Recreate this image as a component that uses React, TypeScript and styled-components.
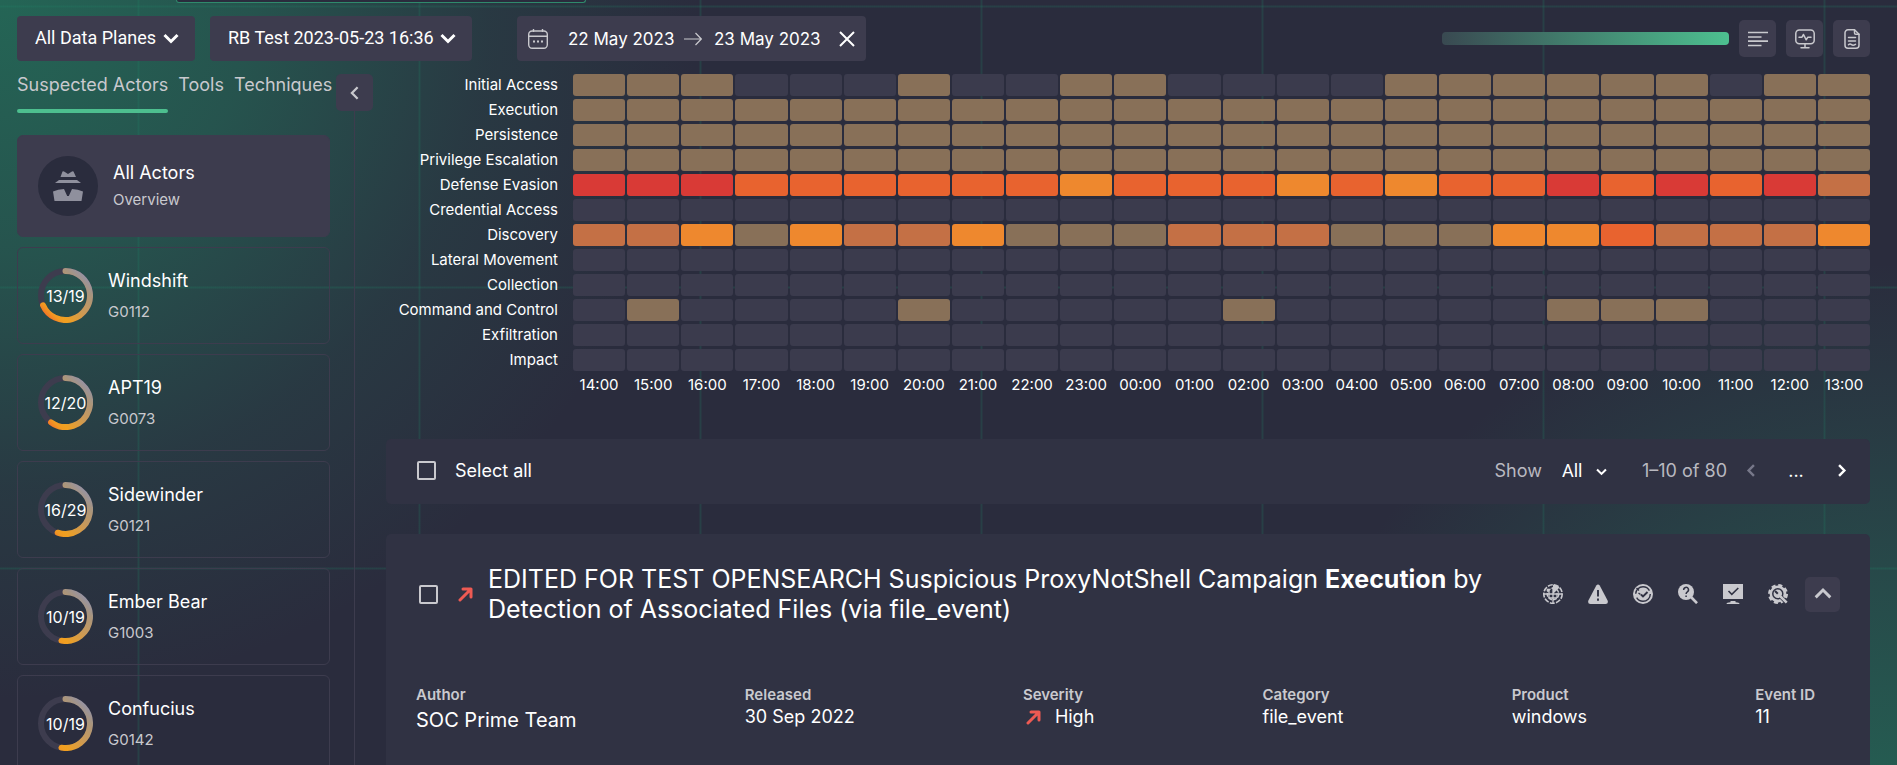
import React from "react";
import styled, { createGlobalStyle } from "styled-components";

const color = {
  base: "#2a2c3d",
  raised: "#3d3c4e",
  panel: "#303243",
  text: "#ffffff",
  soft: "#c9c9ce",
  muted: "#b9b9c0",
  green: "#4dbf8f",
  red: "#ee5a53",
};

const GlobalStyle = createGlobalStyle`
  *, *::before, *::after { box-sizing: border-box; }
  body {
    margin: 0;
    background: ${color.base};
    color: ${color.text};
    font-family: Inter, "Noto Sans", sans-serif;
    font-size: 18px;
  }
  button, input, select { font: inherit; color: inherit; margin: 0; }
  button { cursor: pointer; }
  svg { display: block; flex: none; }
`;

const Page = styled.div`
  display: flex;
  flex-direction: column;
  height: 100vh;
  overflow: hidden;
  background:
    linear-gradient(90deg, rgba(30, 130, 100, 0.1) 0 3px, transparent 3px) 137px 0 / 281px 281px,
    linear-gradient(90deg, rgba(30, 140, 108, 0.12) 0 1px, transparent 1px) 138px 0 / 281px 281px,
    linear-gradient(180deg, rgba(30, 130, 100, 0.1) 0 3px, transparent 3px) 0 5px / 281px 281px,
    linear-gradient(180deg, rgba(30, 140, 108, 0.12) 0 1px, transparent 1px) 0 6px / 281px 281px,
    radial-gradient(circle 700px at 0 0, rgba(35, 112, 90, 0.84), rgba(35, 112, 90, 0.58) 36%, rgba(35, 112, 90, 0.19) 70%, rgba(35, 112, 90, 0) 100%),
    radial-gradient(circle 640px at 100% 118%, rgba(35, 112, 90, 0.84), rgba(35, 112, 90, 0.7) 21%, rgba(35, 112, 90, 0.46) 48%, rgba(35, 112, 90, 0.2) 76%, rgba(35, 112, 90, 0) 100%),
    ${color.base};
`;

const SearchEdge = styled.div`
  flex: none;
  height: 3px;
  width: 410px;
  margin-left: 176px;
  border: 1px solid #2f8a6c;
  border-top: 0;
  border-radius: 0 0 3px 3px;
  background: ${color.base};
`;

const Toolbar = styled.header`
  display: flex;
  align-items: center;
  gap: 15px;
  padding: 13px 27px 0 17px;
`;

const PickerBox = styled.label`
  position: relative;
  display: block;
  font-family: Roboto, sans-serif;
  svg {
    position: absolute;
    right: 16px;
    top: 14px;
    pointer-events: none;
  }
`;

const Picker = styled.select`
  appearance: none;
  display: block;
  height: 45px;
  padding: 0 38px 2px 18px;
  border: 0;
  border-radius: 4px;
  background: ${color.raised};
`;

const DateRange = styled.div`
  display: flex;
  align-items: center;
  height: 45px;
  margin-left: 30px;
  padding: 0 11px;
  border-radius: 4px;
  background: ${color.raised};
`;

const DateInput = styled.input`
  width: 110px;
  height: 30px;
  padding: 0;
  border: 0;
  background: transparent;
  font-size: 17px;
`;

const DateStart = styled(DateInput)`
  margin: 0 6px 0 20px;
`;

const DateEnd = styled(DateInput)`
  margin: 0 15px 0 12px;
`;

const PlainButton = styled.button<{ $size: number }>`
  display: grid;
  place-items: center;
  flex: none;
  width: ${(p) => p.$size}px;
  height: ${(p) => p.$size}px;
  padding: 0;
  border: 0;
  background: transparent;
`;

const ToolbarEnd = styled.div`
  display: flex;
  align-items: center;
  gap: 10px;
  margin-left: auto;
`;

const ScaleBar = styled.div`
  width: 287px;
  height: 13px;
  border-radius: 4px;
  background: linear-gradient(90deg, #394951, #4dc090);
`;

const TileButton = styled(PlainButton)`
  border-radius: 5px;
  background: ${color.raised};
  color: ${color.soft};
`;

const Body = styled.div`
  display: flex;
  flex: 1;
  min-height: 0;
  padding: 13px 27px 0 17px;
`;

const Sidebar = styled.aside`
  display: flex;
  flex-direction: column;
  flex: none;
  width: 313px;
`;

const Tabs = styled.div`
  display: flex;
  gap: 10px;
  margin-bottom: 22px;
`;

const Tab = styled.button<{ $active?: boolean }>`
  position: relative;
  height: 39px;
  padding: 0 0 17px;
  border: 0;
  background: transparent;
  color: ${color.soft};
  line-height: 22px;
  white-space: nowrap;
  &::after {
    content: "";
    position: absolute;
    inset: auto 0 0;
    height: 4px;
    border-radius: 2px;
    background: ${(p) => (p.$active ? color.green : "transparent")};
  }
`;

const ActorList = styled.div`
  display: flex;
  flex-direction: column;
  gap: 10px;
  overflow-y: auto;
  scrollbar-width: none;
`;

const ActorCard = styled.button<{ $active?: boolean }>`
  display: flex;
  align-items: center;
  flex: none;
  gap: 15px;
  width: 100%;
  height: ${(p) => (p.$active ? 102 : 97)}px;
  padding: 0 20px;
  border: 1px solid ${color.raised};
  border-radius: 6px;
  background: ${(p) => (p.$active ? color.raised : "transparent")};
  text-align: left;
`;

const Avatar = styled.span`
  display: grid;
  place-items: center;
  width: 60px;
  height: 60px;
  border-radius: 50%;
  background: ${color.base};
`;

const Ring = styled.span`
  display: grid;
  place-items: center;
  width: 55px;
  height: 55px;
  font-size: 16px;
  > * { grid-area: 1 / 1; }
`;

const ActorText = styled.span<{ $tight?: boolean }>`
  display: flex;
  flex-direction: column;
  gap: ${(p) => (p.$tight ? 6 : 10)}px;
`;

const ActorName = styled.span`
  line-height: 22px;
`;

const ActorId = styled.span`
  color: ${color.soft};
  font-size: 15px;
  line-height: 20px;
`;

const Rail = styled.div`
  display: flex;
  flex-direction: column;
  align-items: center;
  flex: none;
  width: 37px;
  margin: 0 13px 0 6px;
  &::after {
    content: "";
    flex: 1;
    width: 1px;
    background: ${color.raised};
  }
`;

const Main = styled.main`
  flex: 1;
  min-width: 0;
  overflow-y: auto;
  scrollbar-width: none;
`;

const HeatTable = styled.table`
  width: calc(100% + 2px);
  margin: -3px 0 0;
  table-layout: fixed;
  border-collapse: separate;
  border-spacing: 2px 3px;
  font-size: 15px;
  line-height: 22px;
  th { font-weight: 400; padding: 0; white-space: nowrap; }
`;

const LabelCol = styled.col`
  width: 183px;
`;

const RowLabel = styled.th`
  text-align: right;
  && { padding-right: 13px; }
`;

const Cell = styled.td<{ $fill: string }>`
  height: 22px;
  padding: 0;
  border-radius: 3px;
  background: ${(p) => p.$fill};
`;

const Hour = styled.th`
  text-align: center;
`;

const ListBar = styled.section`
  display: flex;
  align-items: center;
  height: 65px;
  margin-top: 40px;
  padding: 0 16px 2px 31px;
  border-radius: 5px;
  background: ${color.panel};
  color: ${color.muted};
`;

const Check = styled.input`
  appearance: none;
  flex: none;
  width: 19px;
  height: 19px;
  border: 2px solid ${color.soft};
  border-radius: 2px;
`;

const SelectAll = styled.label`
  display: flex;
  align-items: center;
  gap: 19px;
  margin-right: auto;
  color: ${color.text};
`;

const ShowLabel = styled.label`
  display: flex;
  align-items: center;
  gap: 20px;
`;

const ShowBox = styled.span`
  position: relative;
  display: block;
  color: ${color.text};
  font-family: Roboto, sans-serif;
  svg {
    position: absolute;
    right: 0;
    top: 8px;
    pointer-events: none;
  }
`;

const ShowSelect = styled.select`
  appearance: none;
  display: block;
  height: 26px;
  padding: 0 24px 0 0;
  border: 0;
  background: transparent;
`;

const RangeText = styled.span`
  margin: 0 11px 0 35px;
`;

const Pager = styled.nav`
  display: flex;
  align-items: center;
  gap: 15px;
  color: ${color.text};
`;

const RuleCard = styled.article`
  margin: 30px 0 40px;
  padding: 30px 30px 36px;
  border-radius: 5px;
  background: ${color.panel};
`;

const RuleHead = styled.div`
  display: flex;
  align-items: center;
  padding-left: 3px;
`;

const RuleTitle = styled.h2`
  flex: 1;
  margin: 0 25px 0 15px;
  font-size: 25px;
  font-weight: 400;
  line-height: 30px;
`;

const SeverityMark = styled.span`
  margin-left: 20px;
`;

const RuleActions = styled.div`
  display: flex;
  align-items: center;
  gap: 25px;
  color: ${color.soft};
`;

const CollapseButton = styled(TileButton)`
  margin-left: -8px;
`;

const Facts = styled.dl`
  display: flex;
  justify-content: space-between;
  margin: 60px 0 0;
  padding-right: 25px;
`;

const FactTerm = styled.dt`
  color: ${color.soft};
  font-size: 15px;
  font-weight: 600;
  line-height: 22px;
`;

const FactValue = styled.dd<{ $large?: boolean }>`
  display: flex;
  align-items: center;
  gap: 14px;
  margin: 0;
  font-size: ${(p) => (p.$large ? 20 : 18)}px;
  line-height: ${(p) => (p.$large ? 28 : 22)}px;
  svg { margin-left: 3px; }
`;

const Chevron = ({ size = 16, turn = 0, weight = 3, tone = "currentColor" }) => (
  <svg width={size} height={size} viewBox="0 0 16 16" fill="none" aria-hidden="true">
    <path d="M1.500 5L8 11.500L14.500 5" stroke={tone} strokeWidth={weight} transform={`rotate(${turn} 8 8)`} />
  </svg>
);

const CalendarIcon = () => (
  <svg width="20" height="20" viewBox="0 0 20 20" fill="none" stroke={color.soft} strokeWidth="1.400" aria-hidden="true">
    <rect x="0.700" y="2" width="18.600" height="17.300" rx="3.500" />
    <path d="M1 7.200H19M5.500 0V3M14.500 0V3" />
    <path d="M5 12.500H7M9 12.500H11M13 12.500H15" strokeWidth="2" />
  </svg>
);

const ArrowIcon = () => (
  <svg width="18" height="14" viewBox="0 0 18 14" fill="none" stroke={color.soft} strokeWidth="1.200" aria-hidden="true">
    <path d="M0 7H17M11.500 1L17.300 7L11.500 13" />
  </svg>
);

const CloseIcon = () => (
  <svg width="16" height="16" viewBox="0 0 16 16" fill="none" stroke="#fff" strokeWidth="2" aria-hidden="true">
    <path d="M1 1L15 15M15 1L1 15" />
  </svg>
);

const LinesIcon = () => (
  <svg width="20" height="16" viewBox="0 0 20 16" fill="none" stroke="currentColor" strokeWidth="1.700" aria-hidden="true">
    <path d="M0 1.500H20M0 6H13.500M0 10.200H20M0 14.500H13.500" />
  </svg>
);

const MonitorIcon = () => (
  <svg width="20" height="20" viewBox="0 0 20 20" fill="none" stroke="currentColor" strokeWidth="1.500" strokeLinecap="round" strokeLinejoin="round" aria-hidden="true">
    <rect x="0.800" y="1" width="18.400" height="13.800" rx="3.500" />
    <path d="M4 8.300H6.800L8.500 5.500L11.200 10.800L12.700 8.300H16M10 15V18.300M6 18.700H14" />
  </svg>
);

const DocIcon = () => (
  <svg width="16" height="20" viewBox="0 0 16 20" fill="none" stroke="currentColor" strokeWidth="1.500" strokeLinecap="round" strokeLinejoin="round" aria-hidden="true">
    <path d="M10.500 0.800H4A3 3 0 0 0 1 3.800V16.200A3 3 0 0 0 4 19.200H12A3 3 0 0 0 15 16.200V5.300Z" />
    <path d="M10.500 1V4Q10.500 5.300 11.800 5.300H15M4.500 8.500H11.500M4.500 12H11.500M4.500 15.800Q6 14.400 7.500 15.600T11.500 15.400" />
  </svg>
);

const SpyIcon = () => (
  <svg width="30" height="30" viewBox="0 0 30 30" fill="#8f909d" aria-hidden="true">
    <path d="M9.500 0.500Q10.500 0 11.500 0.700L15 3L18.500 0.700Q19.500 0 20.500 0.500L23 6H7.500Z" />
    <path d="M6 9H24L28 12H2Z" />
    <path d="M0 20.500Q5 18 11 18L14.200 25H15.800L19 18Q25 18 30 20.500L28.500 30H1.500Z" />
  </svg>
);

const UpRightIcon = () => (
  <svg width="15" height="15" viewBox="0 0 15 15" fill="none" stroke={color.red} strokeWidth="3" strokeLinecap="round" strokeLinejoin="round" aria-hidden="true">
    <path d="M2 13L12.500 2.500M5 1.900H13V10" />
  </svg>
);

const RadarIcon = () => (
  <svg width="20" height="20" viewBox="0 0 20 20" fill="none" stroke="currentColor" aria-hidden="true">
    <circle cx="10" cy="10" r="9.200" strokeWidth="1.600" strokeDasharray="5 1.300" />
    <circle cx="10" cy="10" r="5.800" strokeWidth="1.400" strokeDasharray="4 1" />
    <path d="M10 3V19M1 10H19M6 6V14M14 9V14M6 14H14" strokeWidth="1.300" />
    <path d="M10 10V0.500A9.500 9.500 0 0 1 16.500 3.500Z" fill="currentColor" stroke="none" />
    <circle cx="5" cy="6" r="1.500" fill="currentColor" stroke="none" />
  </svg>
);

const WarnIcon = () => (
  <svg width="20" height="20" viewBox="0 0 20 20" aria-hidden="true">
    <path d="M8.300 1.500Q10 -0.700 11.700 1.500L19.600 16.500Q20.600 19.700 17.600 20H2.400Q-0.600 19.700 0.400 16.500Z" fill="currentColor" />
    <path d="M10 6V12.500M10 14.500V16.800" stroke={color.panel} strokeWidth="1.900" />
  </svg>
);

const TargetCheckIcon = () => (
  <svg width="20" height="20" viewBox="0 0 20 20" fill="none" aria-hidden="true">
    <circle cx="10" cy="10" r="10" fill="currentColor" />
    <circle cx="10" cy="10" r="7.300" stroke={color.panel} strokeWidth="1.400" strokeDasharray="19 4" />
    <path d="M8 10.500L10 12.500L14.500 8" stroke={color.panel} strokeWidth="1.900" />
    <path d="M5.500 9L7.500 10.500M3.500 4L6 6.500" stroke={color.panel} strokeWidth="1.400" />
  </svg>
);

const SearchHelpIcon = () => (
  <svg width="20" height="20" viewBox="0 0 20 20" fill="none" aria-hidden="true">
    <circle cx="8" cy="8" r="8" fill="currentColor" />
    <path d="M13 13L19 19.200" stroke="currentColor" strokeWidth="2.600" />
    <path d="M5.700 6A2.400 2.400 0 1 1 9.300 7.800Q8.100 8.500 8.100 10M8.100 11.500V13" stroke={color.panel} strokeWidth="1.500" />
  </svg>
);

const ScreenCheckIcon = () => (
  <svg width="20" height="20" viewBox="0 0 20 20" fill="none" aria-hidden="true">
    <path d="M0 0H20V15H0ZM7.500 17H12.500V18.300Q16.500 18.500 16.500 20H3.500Q3.500 18.500 7.500 18.300Z" fill="currentColor" />
    <path d="M5.500 7L8.800 10.300L15.300 4" stroke={color.panel} strokeWidth="1.600" />
  </svg>
);

const GearToolIcon = () => (
  <svg width="20" height="20" viewBox="0 0 20 20" fill="none" aria-hidden="true">
    <circle cx="10" cy="10" r="8.400" fill="currentColor" />
    <circle cx="10" cy="10" r="8.600" stroke="currentColor" strokeWidth="2.800" strokeDasharray="4 2.754" />
    <circle cx="9.800" cy="9.800" r="5" stroke={color.panel} strokeWidth="1.500" />
    <path d="M13.500 11.500L20 18M11.500 13.500L18 20" stroke={color.panel} strokeWidth="1.200" />
    <path d="M12 12L18.700 18.700" stroke="currentColor" strokeWidth="2.600" />
    <path d="M7 7L9.800 9.800" stroke={color.panel} strokeWidth="2" />
  </svg>
);

const radius = 24.5;

function arc(part: number) {
  const angle = part * 2 * Math.PI;
  const x = 27.5 + radius * Math.sin(angle);
  const y = 27.5 - radius * Math.cos(angle);
  return `M27.5 ${27.5 - radius}A${radius} ${radius} 0 ${part > 0.5 ? 1 : 0} 1 ${x} ${y}`;
}

const ScoreRing = ({ score, total }: { score: number; total: number }) => (
  <Ring>
    <svg width="55" height="55" viewBox="0 0 55 55" fill="none" strokeWidth="6" aria-hidden="true">
      <defs>
        <linearGradient id="score" gradientUnits="userSpaceOnUse" x1="55" y1="0" x2="0" y2="55">
          <stop offset="0.150" stopColor="#9793a1" />
          <stop offset="0.260" stopColor="#a8957f" />
          <stop offset="0.500" stopColor="#cd9a54" />
          <stop offset="0.720" stopColor="#f0a020" />
          <stop offset="0.780" stopColor="#f19a22" />
          <stop offset="0.850" stopColor="#f37826" />
        </linearGradient>
      </defs>
      <circle cx="27.500" cy="27.500" r={radius} stroke={color.raised} />
      <path d={arc(score / total)} stroke="url(#score)" strokeLinecap="round" />
    </svg>
    <span>{score}/{total}</span>
  </Ring>
);

const actors = [
  { name: "Windshift", id: "G0112", score: 13, total: 19 },
  { name: "APT19", id: "G0073", score: 12, total: 20 },
  { name: "Sidewinder", id: "G0121", score: 16, total: 29 },
  { name: "Ember Bear", id: "G1003", score: 10, total: 19 },
  { name: "Confucius", id: "G0142", score: 10, total: 19 },
];

/* Heat levels: 0 none, 1 low, 2 moderate, 3 raised, 4 high, 5 critical */
const levels = ["#3b3b4d", "#887058", "#c47045", "#ee882e", "#e8632f", "#d93a36"];
const none = "000000000000000000000000";
const low = "111111111111111111111111";
const tactics: [string, string][] = [
  ["Initial Access", "111000100110000111111011"],
  ["Execution", low],
  ["Persistence", low],
  ["Privilege Escalation", low],
  ["Defense Evasion", "555444444344434344545452"],
  ["Credential Access", none],
  ["Discovery", "223132231112221113342223"],
  ["Lateral Movement", none],
  ["Collection", none],
  ["Command and Control", "010000100000100000111000"],
  ["Exfiltration", none],
  ["Impact", none],
];
const hours = Array.from({ length: 24 }, (_, i) => `${String((i + 14) % 24).padStart(2, "0")}:00`);

const ruleActions: [string, React.FC][] = [
  ["Threat radar", RadarIcon],
  ["Alerts", WarnIcon],
  ["Coverage", TargetCheckIcon],
  ["Hunt", SearchHelpIcon],
  ["Deploy", ScreenCheckIcon],
  ["Configure", GearToolIcon],
];

export default function App() {
  return (
    <Page>
      <GlobalStyle />
      <SearchEdge />
      <Toolbar>
        <PickerBox>
          <Picker aria-label="Data plane"><option>All Data Planes</option></Picker>
          <Chevron />
        </PickerBox>
        <PickerBox>
          <Picker aria-label="Scan"><option>RB Test 2023-05-23 16:36</option></Picker>
          <Chevron />
        </PickerBox>
        <DateRange>
          <CalendarIcon />
          <DateStart aria-label="Start date" defaultValue="22 May 2023" />
          <ArrowIcon />
          <DateEnd aria-label="End date" defaultValue="23 May 2023" />
          <PlainButton $size={16} aria-label="Clear dates"><CloseIcon /></PlainButton>
        </DateRange>
        <ToolbarEnd>
          <ScaleBar />
          <TileButton $size={37} aria-label="List view"><LinesIcon /></TileButton>
          <TileButton $size={37} aria-label="Monitor"><MonitorIcon /></TileButton>
          <TileButton $size={37} aria-label="Report"><DocIcon /></TileButton>
        </ToolbarEnd>
      </Toolbar>
      <Body>
        <Sidebar>
          <Tabs role="tablist">
            <Tab role="tab" aria-selected="true" $active>Suspected Actors</Tab>
            <Tab role="tab" aria-selected="false">Tools</Tab>
            <Tab role="tab" aria-selected="false">Techniques</Tab>
          </Tabs>
          <ActorList>
            <ActorCard $active>
              <Avatar><SpyIcon /></Avatar>
              <ActorText $tight>
                <ActorName>All Actors</ActorName>
                <ActorId>Overview</ActorId>
              </ActorText>
            </ActorCard>
            {actors.map((a) => (
              <ActorCard key={a.id}>
                <ScoreRing score={a.score} total={a.total} />
                <ActorText>
                  <ActorName>{a.name}</ActorName>
                  <ActorId>{a.id}</ActorId>
                </ActorText>
              </ActorCard>
            ))}
          </ActorList>
        </Sidebar>
        <Rail>
          <TileButton $size={37} aria-label="Collapse sidebar"><Chevron size={14} turn={90} weight={2.6} /></TileButton>
        </Rail>
        <Main>
          <HeatTable>
            <colgroup><LabelCol /></colgroup>
            <tbody>
              {tactics.map(([name, row]) => (
                <tr key={name}>
                  <RowLabel scope="row">{name}</RowLabel>
                  {row.split("").map((level, i) => (
                    <Cell key={i} $fill={levels[Number(level)]} />
                  ))}
                </tr>
              ))}
            </tbody>
            <tfoot>
              <tr>
                <td />
                {hours.map((h) => <Hour key={h} scope="col">{h}</Hour>)}
              </tr>
            </tfoot>
          </HeatTable>
          <ListBar>
            <SelectAll><Check type="checkbox" />Select all</SelectAll>
            <ShowLabel>
              Show
              <ShowBox>
                <ShowSelect><option>All</option></ShowSelect>
                <Chevron size={11} weight={3} />
              </ShowBox>
            </ShowLabel>
            <RangeText>1–10 of 80</RangeText>
            <Pager aria-label="Pages">
              <PlainButton $size={26} aria-label="Previous page"><Chevron size={13} turn={90} weight={3} tone="#77788a" /></PlainButton>
              <PlainButton $size={34}>...</PlainButton>
              <PlainButton $size={26} aria-label="Next page"><Chevron size={13} turn={-90} weight={3} /></PlainButton>
            </Pager>
          </ListBar>
          <RuleCard>
            <RuleHead>
              <Check type="checkbox" aria-label="Select rule" />
              <SeverityMark><UpRightIcon /></SeverityMark>
              <RuleTitle>
                EDITED FOR TEST OPENSEARCH Suspicious ProxyNotShell Campaign <b>Execution</b> by Detection of Associated Files (via file_event)
              </RuleTitle>
              <RuleActions>
                {ruleActions.map(([label, Icon]) => (
                  <PlainButton key={label} $size={20} aria-label={label}><Icon /></PlainButton>
                ))}
                <CollapseButton $size={35} aria-label="Collapse rule"><Chevron size={18} turn={180} weight={2.6} /></CollapseButton>
              </RuleActions>
            </RuleHead>
            <Facts>
              <div>
                <FactTerm>Author</FactTerm>
                <FactValue $large>SOC Prime Team</FactValue>
              </div>
              <div>
                <FactTerm>Released</FactTerm>
                <FactValue>30 Sep 2022</FactValue>
              </div>
              <div>
                <FactTerm>Severity</FactTerm>
                <FactValue><UpRightIcon />High</FactValue>
              </div>
              <div>
                <FactTerm>Category</FactTerm>
                <FactValue>file_event</FactValue>
              </div>
              <div>
                <FactTerm>Product</FactTerm>
                <FactValue>windows</FactValue>
              </div>
              <div>
                <FactTerm>Event ID</FactTerm>
                <FactValue>11</FactValue>
              </div>
            </Facts>
          </RuleCard>
        </Main>
      </Body>
    </Page>
  );
}
